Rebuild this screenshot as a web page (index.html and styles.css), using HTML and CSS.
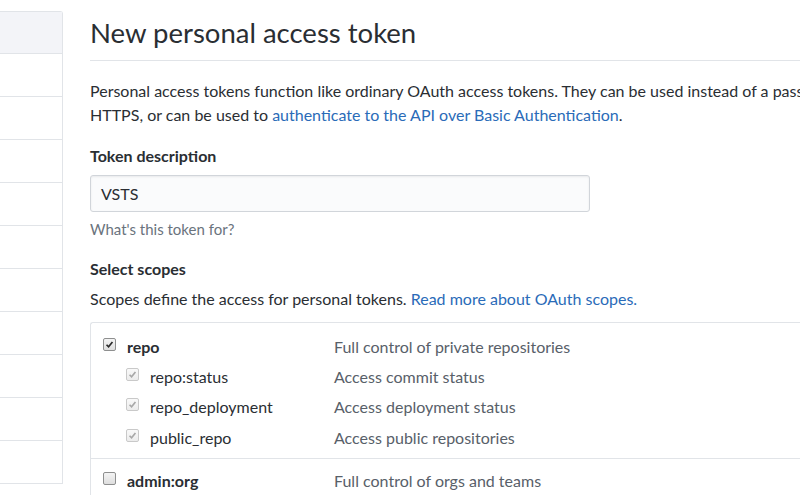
FILE: index.html
```html
<!DOCTYPE html>
<html>
<head>
<meta charset="utf-8">
<link rel="stylesheet" href="styles.css">
</head>
<body>
<div class="layout">
  <nav class="sidebar">
    <div class="side-item selected"></div>
    <div class="side-item"></div>
    <div class="side-item"></div>
    <div class="side-item"></div>
    <div class="side-item"></div>
    <div class="side-item"></div>
    <div class="side-item"></div>
    <div class="side-item"></div>
    <div class="side-item"></div>
    <div class="side-item"></div>
    <div class="side-item"></div>
  </nav>
  <main class="main">
    <div class="subhead"><h2 class="subhead-title">New personal access token</h2></div>
    <p class="intro">Personal access tokens function like ordinary OAuth access tokens. They can be used instead of a password for Git over<br>HTTPS, or can be used to <a href="#">authenticate to the API over Basic Authentication</a>.</p>
    <div class="form-group">
      <label class="form-label">Token description</label>
      <div class="input">VSTS</div>
      <p class="note">What's this token for?</p>
    </div>
    <h3 class="form-label scopes-title">Select scopes</h3>
    <p class="scopes-desc">Scopes define the access for personal tokens. <a href="#">Read more about OAuth scopes.</a></p>
    <div class="scopes">
      <div class="scope-group">
        <div class="scope-row">
          <div class="scope-name main-scope"><span class="cb checked"><svg viewBox="0 0 13 13"><path d="M3 6.8 L5.4 9.2 L10 3.6" /></svg></span>repo</div>
          <div class="scope-desc">Full control of private repositories</div>
        </div>
        <div class="scope-row">
          <div class="scope-name sub-scope"><span class="cb checked disabled"><svg viewBox="0 0 13 13"><path d="M3 6.8 L5.4 9.2 L10 3.6" /></svg></span>repo:status</div>
          <div class="scope-desc">Access commit status</div>
        </div>
        <div class="scope-row">
          <div class="scope-name sub-scope"><span class="cb checked disabled"><svg viewBox="0 0 13 13"><path d="M3 6.8 L5.4 9.2 L10 3.6" /></svg></span>repo_deployment</div>
          <div class="scope-desc">Access deployment status</div>
        </div>
        <div class="scope-row">
          <div class="scope-name sub-scope"><span class="cb checked disabled"><svg viewBox="0 0 13 13"><path d="M3 6.8 L5.4 9.2 L10 3.6" /></svg></span>public_repo</div>
          <div class="scope-desc">Access public repositories</div>
        </div>
      </div>
      <div class="scope-group second">
        <div class="scope-row">
          <div class="scope-name main-scope"><span class="cb"></span>admin:org</div>
          <div class="scope-desc">Full control of orgs and teams</div>
        </div>
      </div>
    </div>
  </main>
</div>
</body>
</html>
```
FILE: styles.css
```css
html, body {
  margin: 0;
  padding: 0;
  background: #fff;
  overflow: hidden;
}
body {
  font-family: Lato, "Open Sans", sans-serif;
  font-size: 16px;
  color: #2a2e33;
  width: 800px;
  height: 495px;
}
.layout {
  display: flex;
  align-items: flex-start;
}
.sidebar {
  flex: 0 0 62px;
  margin-top: 11px;
  border-top: 1px solid #e1e4e8;
  border-right: 1px solid #e1e4e8;
  border-radius: 0 3px 0 0;
}
.side-item {
  height: 42px;
  border-bottom: 1px solid #e1e4e8;
}
.side-item.selected {
  height: 41px;
  background: #f3f4f8;
}
.main {
  flex: 1;
  margin-left: 27px;
  min-width: 0;
  white-space: nowrap;
}
.subhead {
  padding-top: 15px;
  padding-bottom: 10px;
  border-bottom: 1px solid #e1e4e8;
}
.subhead-title {
  margin: 0;
  font-size: 27.5px;
  line-height: 35px;
  font-weight: 400;
  color: #2a2e33;
}
.intro {
  margin: 18px 0 0;
  line-height: 24px;
}
a {
  color: #2a6bb8;
  text-decoration: none;
}
.form-group {
  margin-top: 17px;
}
.form-label {
  display: block;
  margin: 0;
  font-size: 16px;
  font-weight: 700;
  line-height: 24px;
}
.input {
  margin-top: 7px;
  width: 478px;
  height: 35px;
  line-height: 35px;
  padding: 0 10px;
  background: #fafbfc;
  border: 1px solid #d1d5da;
  border-radius: 3px;
  box-shadow: inset 0 1px 2px rgba(27, 31, 35, 0.075);
  font-size: 16px;
}
.note {
  margin: 7px 0 0;
  font-size: 15px;
  line-height: 21px;
  color: #6a737d;
}
.scopes-title {
  margin-top: 17px;
}
.scopes-desc {
  margin: 6px 0 0;
  line-height: 24px;
}
.scopes {
  margin-top: 11px;
  border: 1px solid #e1e4e8;
  border-right: 0;
  border-radius: 3px 0 0 3px;
}
.scope-group {
  padding: 8px 12px 6px;
  border-bottom: 1px solid #e1e4e8;
}
.scope-group.second {
  padding-top: 6px;
}
.scope-row {
  display: flex;
  align-items: center;
  height: 30.3px;
}
.scope-name {
  display: flex;
  align-items: center;
  width: 231px;
  flex: 0 0 231px;
}
.main-scope {
  font-weight: 700;
}
.sub-scope {
  padding-left: 23px;
  width: 208px;
  flex: 0 0 208px;
}
.scope-desc {
  color: #586069;
}
.cb {
  box-sizing: border-box;
  width: 13px;
  height: 13px;
  margin-right: 11px;
  margin-top: -4px;
  border: 1px solid #8e8f8f;
  border-radius: 2px;
  background: linear-gradient(#f4f4f4, #dedede);
  display: inline-flex;
}
.cb svg {
  width: 11px;
  height: 11px;
  fill: none;
  stroke: #2b2b2b;
  stroke-width: 2;
}
.cb.disabled {
  border-color: #c9c9c9;
  background: linear-gradient(#f9f9f9, #ececec);
}
.cb.disabled svg {
  stroke: #a8a8a8;
}
```
